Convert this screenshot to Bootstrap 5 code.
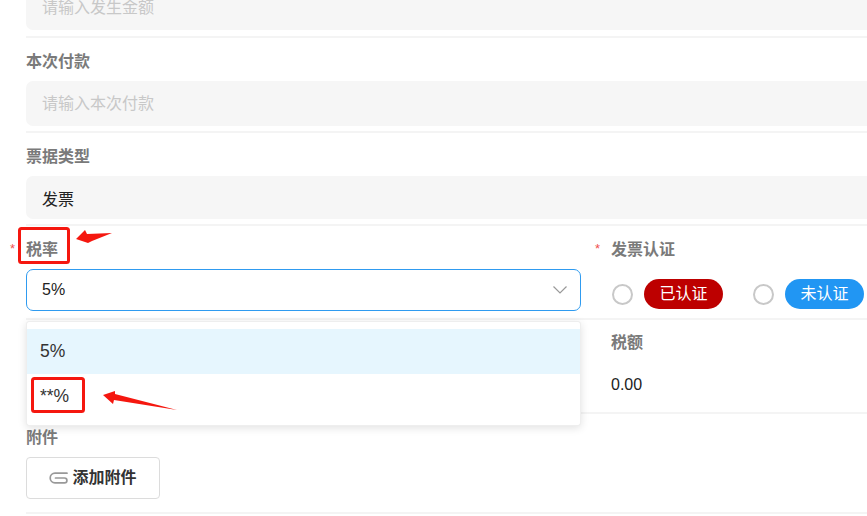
<!DOCTYPE html>
<html lang="zh">
<head>
    <meta charset="UTF-8">
    <meta name="viewport" content="width=device-width, initial-scale=1.0">
    <title>付款表单</title>
    <link href="https://cdn.jsdelivr.net/npm/bootstrap@5.3.0/dist/css/bootstrap.min.css" rel="stylesheet">
    <style>
        html, body {
            height: 516px;
            overflow: hidden;
        }
        body {
            width: 867px;
            background-color: #fff;
            font-family: "Liberation Sans", "Noto Sans CJK SC", sans-serif;
            font-size: 16px;
            color: #222;
        }
        .pay-form {
            width: 900px;
            margin-top: -15px;
            padding-left: 26px;
        }
        .pay-field {
            border-bottom: 2px solid #f4f4f4;
            padding-top: 11px;
        }
        .pay-field.first {
            padding-top: 0;
            padding-bottom: 6px;
        }
        .pay-field.gap5 { padding-bottom: 5px; }
        .pay-field.gap13 { padding-bottom: 13px; }
        .pay-field.gap15 { padding-bottom: 15px; }
        .pay-label {
            font-weight: 700;
            color: #7a7a7a;
            height: 24px;
            line-height: 24px;
            padding-top: 1px;
            margin-bottom: 8px;
            position: relative;
        }
        .pay-label.req::before {
            content: "*";
            position: absolute;
            left: -16px;
            top: 0;
            color: #f0504f;
            font-size: 13px;
            font-weight: 400;
        }
        .pay-input.form-control {
            background-color: #f6f6f6;
            border: 0;
            border-radius: 7px;
            height: 45px;
            padding: 0 16px;
            color: #222;
            font-size: 16px;
        }
        .pay-input.form-control::placeholder { color: #c8c8c8; }
        .pay-input.h43 { height: 43px; }
        .pay-cols {
            display: grid;
            grid-template-columns: 555px 1fr;
            column-gap: 14px;
        }
        .pay-right { padding-left: 16px; }
        .pay-select {
            height: 42px;
            border: 1px solid #2f9bf0;
            border-radius: 7px;
            padding: 0 13px 0 15px;
        }
        .pay-menu.dropdown-menu {
            top: 52px;
            left: 0;
            width: 555px;
            height: 105px;
            padding: 7px 0 0;
            border: 1px solid #eee;
            border-radius: 3px;
            box-shadow: 0 2px 8px rgba(0, 0, 0, .12);
        }
        .pay-menu .dropdown-item {
            height: 45px;
            line-height: 45px;
            padding: 0 13px;
            font-size: 17.5px;
            color: #333;
        }
        .pay-menu .dropdown-item.active {
            background-color: #e6f6fe;
            color: #333;
        }
        .pay-radios {
            height: 30px;
            margin-top: 18px;
            margin-bottom: 9px;
            padding-left: 1px;
        }
        .pay-radio {
            width: 21px;
            height: 21px;
            border: 2px solid #c8c8c8;
            border-radius: 50%;
            margin-right: 11px;
        }
        .pay-pill {
            width: 79px;
            height: 30px;
            line-height: 30px;
            text-align: center;
            border-radius: 15px;
            color: #fff;
            margin-right: 30px;
        }
        .pay-pill.red { background-color: #bd0000; }
        .pay-pill.blue { background-color: #2196f3; }
        .pay-value {
            line-height: 24px;
            margin-top: 18px;
        }
        .pay-attach.btn {
            width: 134px;
            height: 42px;
            padding: 0;
            border: 1px solid #dcdcdc;
            border-radius: 4px;
            font-size: 16px;
            font-weight: 700;
            color: #333;
        }
        .pay-marks {
            position: absolute;
            top: 0;
            left: 0;
            z-index: 2000;
        }
    </style>
</head>
<body>
    <form class="pay-form">
        <div class="pay-field first">
            <input class="form-control pay-input" type="text" placeholder="请输入发生金额">
        </div>
        <div class="pay-field gap5">
            <div class="pay-label">本次付款</div>
            <input class="form-control pay-input" type="text" placeholder="请输入本次付款">
        </div>
        <div class="pay-field gap5">
            <div class="pay-label">票据类型</div>
            <input class="form-control pay-input h43" type="text" value="发票">
        </div>

        <div class="pay-field pay-cols pb-0">
            <div>
                <div class="pay-label req">税率</div>
                <div class="position-relative">
                    <div class="pay-select d-flex align-items-center justify-content-between">
                        <span>5%</span>
                        <svg width="14" height="8" viewBox="0 0 14 8" fill="none" stroke="#999" stroke-width="1.2"><path d="M.5.5l6.5 6.5 6.5-6.5"/></svg>
                    </div>
                    <div class="dropdown-menu show pay-menu">
                        <a class="dropdown-item active" href="#">5%</a>
                        <a class="dropdown-item" href="#">**%</a>
                    </div>
                </div>
            </div>
            <div class="pay-right">
                <div class="pay-label req">发票认证</div>
                <div class="pay-radios d-flex align-items-center">
                    <span class="pay-radio"></span>
                    <span class="pay-pill red">已认证</span>
                    <span class="pay-radio"></span>
                    <span class="pay-pill blue">未认证</span>
                </div>
            </div>
        </div>

        <div class="pay-field pay-cols gap15">
            <div></div>
            <div class="pay-right">
                <div class="pay-label mb-0 pt-0">税额</div>
                <div class="pay-value">0.00</div>
            </div>
        </div>

        <div class="pay-field gap13">
            <div class="pay-label">附件</div>
            <button class="btn pay-attach d-flex align-items-center justify-content-center" type="button">
                <svg class="me-1" width="19" height="12" viewBox="0 0 19 12" fill="none" stroke="#999" stroke-width="1.7" stroke-linecap="round"><path d="M18 1.2H6a4.8 4.8 0 0 0 0 9.6H15.5a2.4 2.4 0 0 0 0-4.8H6.5"/></svg>
                <span>添加附件</span>
            </button>
        </div>
    </form>

    <svg class="pay-marks" width="867" height="516" viewBox="0 0 867 516">
        <rect x="19.5" y="228.5" width="49" height="34" rx="2" fill="none" stroke="#f5170f" stroke-width="3"/>
        <rect x="32.5" y="378.5" width="51" height="33" rx="2" fill="none" stroke="#f5170f" stroke-width="3"/>
        <polygon points="76,239 85,230 87,234 112,233 92,241 88,243" fill="#f5170f"/>
        <polygon points="103,395 115,391 115,394 177,410 114,400 113,404" fill="#f5170f"/>
    </svg>

    <script src="https://cdn.jsdelivr.net/npm/bootstrap@5.3.0/dist/js/bootstrap.bundle.min.js"></script>
</body>
</html>
